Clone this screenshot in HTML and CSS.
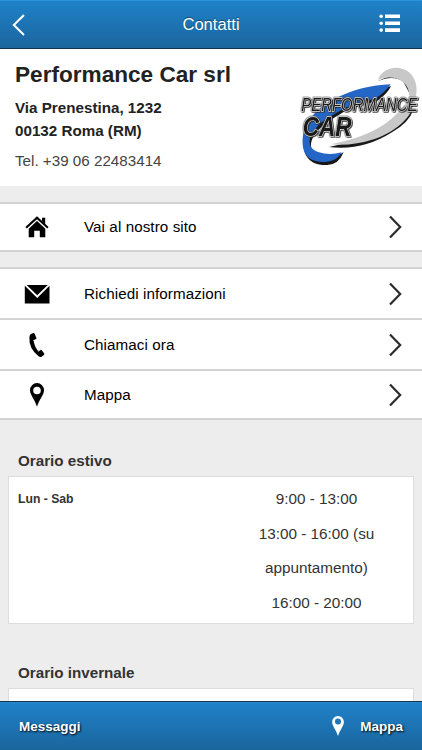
FILE: index.html
```html
<!DOCTYPE html>
<html lang="it">
  <head>
    <meta charset="UTF-8" />
    <meta name="viewport" content="width=device-width, initial-scale=1.0" />
    <title>Contatti</title>
    <link rel="stylesheet" href="styles.css">
  </head>
  <body>
    <header class="topbar">
      <a class="back" href="#">
        <svg width="14" height="24" viewBox="0 0 14 24"><path d="M12 2 1.8 12 12 22" /></svg>
      </a>
      <h1>Contatti</h1>
      <a class="menu" href="#">
        <svg width="22" height="20" viewBox="0 0 22 20">
          <circle cx="2.2" cy="3.3" r="1.8" /><circle cx="2.2" cy="10.2" r="1.8" /><circle cx="2.2" cy="17.1" r="1.8" />
          <path d="M6 1.5h15v3.6H6zM6 8.4h15V12H6zM6 15.3h15v3.6H6z" />
        </svg>
      </a>
    </header>

    <main>
      <section class="company">
        <div class="info">
          <h2>Performance Car srl</h2>
          <address>Via Prenestina, 1232<br />00132 Roma (RM)</address>
          <p class="tel">Tel. +39 06 22483414</p>
        </div>
        <svg class="logo" width="132" height="120" viewBox="0 0 396 360">
          <path class="shadow" d="M303 94C190 108 62 165 43 242C34 288 48 332 112 330Q146 329 161 291Q122 319 84 300C42 280 66 228 130 190Q190 148 257 141Q291 119 303 94Z" />
          <path class="blue" d="M302 88C190 91 58 150 40 235C32 280 42 324 106 321Q142 319 155 292Q118 302 84 291C36 273 60 218 128 180Q190 140 255 132Q286 111 302 88Z" />
          <path class="shadow" d="M117 276Q218 288 306 232Q358 201 370 164Q328 204 244 240Q184 262 117 276ZM262 79Q310 58 340 80L358 114L360 100Q340 60 300 62Z" />
          <path class="grey" d="M121 268C205 253 290 220 331 163Q352 146 358 120C355 78 315 56 264 74C272 49 299 37 322 38C370 42 388 88 377 128C370 190 310 232 254 252Q187 274 121 268Z" />
          <text class="logo-text" x="34" y="167" textLength="348" lengthAdjust="spacingAndGlyphs" font-size="55">PERFORMANCE</text>
          <text class="logo-text big" x="38" y="244" textLength="147" lengthAdjust="spacingAndGlyphs" font-size="82">CAR</text>
        </svg>
      </section>

      <nav class="links">
        <a href="#">
          <svg class="icon" width="26" height="26" viewBox="0 0 26 26">
            <path d="M13 2.2 24.6 13l-1.4 1.6L13 5.2 2.8 14.6 1.4 13zM18 3.8h3.2v6L18 6.8z" />
            <path d="M13 7.1 21.3 14.7V23.2H15.8V16.7H10.2V23.2H4.7V14.7z" />
          </svg>
          <span>Vai al nostro sito</span>
          <svg class="arrow" width="14" height="24" viewBox="0 0 14 24"><path d="M2 1.5 12.2 12 2 22.5" /></svg>
        </a>
      </nav>

      <nav class="links group">
        <a href="#">
          <svg class="icon" width="26" height="26" viewBox="0 0 26 26">
            <path d="M2.7 4h21.1L13.2 14.2zM.8 4.8 13.2 17.1 25.5 4.8V22.5H.8z" />
          </svg>
          <span>Richiedi informazioni</span>
          <svg class="arrow" width="14" height="24" viewBox="0 0 14 24"><path d="M2 1.5 12.2 12 2 22.5" /></svg>
        </a>
        <a href="#">
          <svg class="icon" width="26" height="26" viewBox="0 0 26 26">
            <path d="M6.5 2.3 9.2 1.1Q10.2.8 10.6 1.8L12.4 6Q12.7 7 11.8 7.5L9.7 8.6Q10.2 14.7 14.2 19L16.2 17.8Q17 17.4 17.6 18.1L20.2 21.5Q20.7 22.4 19.9 23L17.6 24.7Q16.2 25.5 14.5 24.2Q4.7 16.5 5.4 5.3Q5.5 3.1 6.5 2.3Z" />
            <path class="cut" d="m9 8.9 3.3-1.8M13.9 19.4l2.9-1.7" />
          </svg>
          <span>Chiamaci ora</span>
          <svg class="arrow" width="14" height="24" viewBox="0 0 14 24"><path d="M2 1.5 12.2 12 2 22.5" /></svg>
        </a>
        <a href="#">
          <svg class="icon" width="26" height="26" viewBox="0 0 26 26">
            <path fill-rule="evenodd" d="M13 1.1A7 7 0 0 0 6 8.2C6 12.5 10.8 17.5 13 24.7C15.2 17.5 20 12.5 20 8.2A7 7 0 0 0 13 1.1ZM13 4.7a3.8 3.8 0 1 1 0 7.6a3.8 3.8 0 1 1 0-7.6Z" />
          </svg>
          <span>Mappa</span>
          <svg class="arrow" width="14" height="24" viewBox="0 0 14 24"><path d="M2 1.5 12.2 12 2 22.5" /></svg>
        </a>
      </nav>

      <section class="hours">
        <h3>Orario estivo</h3>
        <div class="box">
          <strong>Lun - Sab</strong>
          <p>9:00 - 13:00<br />13:00 - 16:00 (su appuntamento)<br />16:00 - 20:00</p>
        </div>
      </section>
      <section class="hours winter">
        <h3>Orario invernale</h3>
        <div class="box"></div>
      </section>
    </main>

    <footer class="bottombar">
      <a href="#">Messaggi</a>
      <a class="map" href="#">
        <svg width="12" height="20" viewBox="0 0 12 20">
          <path fill-rule="evenodd" d="M6 0A5.9 5.9 0 0 0 .1 5.9C.1 9.5 4.2 14 6 20C7.8 14 11.9 9.5 11.9 5.9A5.9 5.9 0 0 0 6 0ZM6 2.6a3 3 0 1 1 0 6a3 3 0 1 1 0-6Z" />
        </svg>
        <span>Mappa</span>
      </a>
    </footer>
  </body>
</html>
```
FILE: styles.css
```css
* {
  box-sizing: border-box;
}
body {
  margin: 0;
  height: 100vh;
  display: flex;
  flex-direction: column;
  overflow: hidden;
  background-color: #ededed;
  font-family: "Liberation Sans", Arial, sans-serif;
  font-size: 15px;
  color: #333;
}
a {
  color: inherit;
  text-decoration: none;
}
svg {
  display: block;
  flex: none;
}
h1,
h2,
h3,
p {
  margin: 0;
}
.topbar {
  flex: none;
  height: 49px;
  padding: 0 21px 0 12px;
  display: grid;
  grid-template-columns: 24px 1fr 24px;
  align-items: center;
  border-top: 1px solid #2b94dd;
  border-bottom: 1px solid #14344d;
  background: linear-gradient(#1f82c9, #1b659d);
  color: #fff;
}
.topbar h1 {
  font-size: 16.6px;
  font-weight: normal;
  text-align: center;
  text-shadow: 0 -1px 1px rgba(0, 0, 0, 0.4);
  padding-left: 9px;
}
.back path {
  fill: none;
  stroke: #fff;
  stroke-width: 2;
}
.menu {
  justify-self: end;
  padding-bottom: 3px;
}
.menu svg,
.bottombar svg {
  fill: #fff;
}
main {
  flex: 1;
  min-height: 0;
  overflow: hidden;
}
.company {
  height: 137px;
  display: flex;
  justify-content: space-between;
  background-color: #fff;
}
.info {
  padding: 13px 0 0 15px;
  color: #222;
}
.info h2 {
  font-size: 22.6px;
  line-height: 26px;
}
.info address {
  margin-top: 8px;
  font-size: 15.2px;
  font-style: normal;
  font-weight: bold;
  line-height: 23px;
}
.info .tel {
  margin-top: 10px;
  font-size: 15.2px;
  line-height: 18px;
  color: #444;
}
.logo {
  margin-top: 6px;
  overflow: visible;
}
.logo .shadow {
  fill: #181818;
}
.logo .blue {
  fill: #2466c5;
}
.logo .grey {
  fill: #c8c8c8;
}
.logo-text {
  font-style: italic;
  fill: #1a1a1a;
  stroke: #e4e4e4;
  stroke-width: 4;
  paint-order: stroke;
  filter: drop-shadow(2px 2px 0 #222) drop-shadow(-1px -1px 0 #444);
}
.logo-text.big {
  font-weight: bold;
}
.links {
  margin-top: 16px;
  border-top: 2px solid #d3d3d3;
  background-color: #fff;
}
.links a {
  height: 48px;
  padding: 0 20px 0 24px;
  display: flex;
  align-items: center;
  border-bottom: 2px solid #d3d3d3;
  font-size: 15.2px;
  color: #000;
}
.links.group {
  margin-top: 15px;
}
.links.group a {
  height: 51px;
}
.links.group a:last-child {
  height: 49px;
}
.links span {
  flex: 1;
  padding-left: 34px;
  line-height: 18px;
  letter-spacing: 0.08px;
}
.links .cut {
  stroke: #fff;
  stroke-width: 0.7;
}
.arrow path {
  fill: none;
  stroke: #2b2b2b;
  stroke-width: 2.2;
}
.hours {
  padding: 31px 8px 0;
}
.hours h3 {
  padding-left: 10px;
  font-size: 15.2px;
  line-height: 20px;
}
.hours .box {
  height: 148px;
  margin-top: 5px;
  padding: 5px 9px;
  display: flex;
  justify-content: space-between;
  border: 1px solid #dcdcdc;
  background-color: #fff;
  line-height: 34.6px;
}
.box strong {
  font-size: 12.2px;
}
.box p {
  width: 175px;
  font-size: 15.3px;
  text-align: center;
}
.hours.winter {
  padding-top: 39px;
}
.bottombar {
  flex: none;
  height: 49px;
  padding: 0 19px;
  display: flex;
  justify-content: space-between;
  align-items: center;
  border-top: 1px solid #14344d;
  box-shadow: inset 0 1px #2e87c8;
  background: linear-gradient(#1f82c9, #1b659d);
  color: #fff;
  font-size: 13.5px;
  font-weight: bold;
  text-shadow: 1px 1px 2px #000;
}
.bottombar .map {
  display: flex;
  align-items: center;
  gap: 16px;
}
```
